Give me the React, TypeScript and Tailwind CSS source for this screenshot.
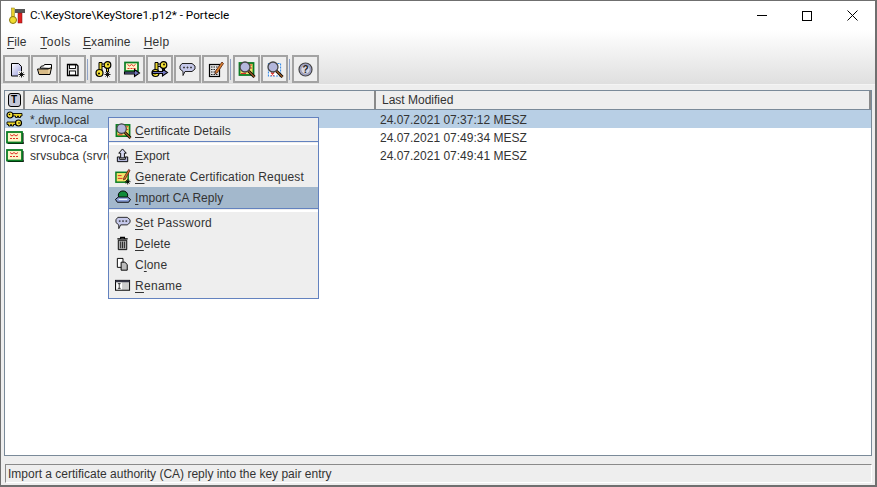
import React from "react";

const Star = ({ x, y }: { x: number; y: number }) => (
  <path
    d={`M${x} ${y - 3}v6M${x - 3} ${y}h6M${x - 2} ${y - 2}l4 4M${x + 2} ${y - 2}l-4 4`}
    stroke="#000"
    strokeWidth="0.9"
  />
);

// two keys as on the toolbar: one head down on the left, one head up on the right
const KeyPairUp = () => (
  <>
    <path d="M4 1.500h3v8h-3z" fill="#e8d42a" stroke="#000" />
    <path d="M7 3h2M7 5.500h2" stroke="#000" />
    <circle cx="4.500" cy="12" r="3.500" fill="#f4e23a" stroke="#000" strokeWidth="1.200" />
    <circle cx="4" cy="12.500" r="1" fill="#000" />
    <path d="M11.500 7h2v4h-2z" fill="#e8d42a" stroke="#000" />
    <circle cx="12.500" cy="4" r="3.300" fill="#f4e23a" stroke="#000" strokeWidth="1.200" />
    <circle cx="13" cy="3.500" r="0.900" fill="#000" />
  </>
);

const Arrow = ({ y = 11 }: { y?: number }) => (
  <path d={`M1.500 ${y}h10v-2.500l5 3.500-5 3.500v-2.500h-10z`} fill="#7479c0" stroke="#000" strokeWidth="1.100" />
);

const Zigzag = ({ x, y }: { x: number; y: number }) => (
  <>
    <path d={`M${x} ${y}l2 1.500 2-1.500 2 1.500 2-1.500`} stroke="#e0302a" fill="none" />
    <path d={`M${x} ${y + 4}h8`} stroke="#e0302a" strokeDasharray="2 1" />
  </>
);

const Glass = ({ x = 0, y = 0 }: { x?: number; y?: number }) => (
  <g transform={`translate(${x} ${y})`}>
    <path d="M9.500 10l6 6" stroke="#000" strokeWidth="3" />
    <path d="M9.500 10l6 6" stroke="#9a5a25" strokeWidth="1.400" />
    <circle cx="6" cy="6" r="5" fill="#b4b7dc" stroke="#444" strokeWidth="1.300" />
  </g>
);

const icons: Record<string, React.ReactNode> = {
  newFile: (
    <>
      <defs>
        <linearGradient id="docFill" x1="0" x2="1" y1="0" y2="1">
          <stop offset="0" stopColor="#ffffff" />
          <stop offset="1" stopColor="#9a9ee0" />
        </linearGradient>
      </defs>
      <path d="M3.500 2.500h7l3 3v9.500h-10z" fill="url(#docFill)" stroke="#000" />
      <rect x="10" y="10" width="6.500" height="6.500" fill="#eeeeee" />
      <Star x={13.500} y={13.500} />
    </>
  ),
  open: (
    <>
      <path d="M4 7l1.500-2h2l1-1.500h7v4z" fill="#fff" stroke="#000" />
      <path d="M1.500 8h10.500l3.500-1.500-1.500 7h-11z" fill="#e8cf9f" stroke="#000" />
      <path d="M3 10h9M3 12h9" stroke="#caa870" />
    </>
  ),
  save: (
    <>
      <path d="M3.500 3.500h9l1.500 1.500v9.500h-10.500z" fill="#e6e6e6" stroke="#000" strokeWidth="1.300" />
      <rect x="5.500" y="4" width="6" height="3.500" fill="#fff" stroke="#000" strokeWidth="0.900" />
      <rect x="5.500" y="10" width="6" height="4" fill="#fff" stroke="#000" strokeWidth="0.900" />
    </>
  ),
  genKey: (
    <>
      <KeyPairUp />
      <Star x={12.500} y={13.500} />
    </>
  ),
  importCert: (
    <>
      <rect x="2" y="1.500" width="13" height="8.500" fill="#fdf6c8" stroke="#0a7d24" strokeWidth="1.700" />
      <Zigzag x={4.500} y={3.500} />
      <Arrow y={11} />
    </>
  ),
  importKey: (
    <>
      <KeyPairUp />
      <Arrow y={10.500} />
    </>
  ),
  bubble: (
    <>
      <path d="M3 2.500h10l3 2.500v3l-3 2.500h-7l-2 4v-4l-3-2.500v-3z" fill="#c5c8ea" stroke="#222" />
      <path d="M4 6.500h2M7.500 6.500h2M11 6.500h2M5 5.500v2M8.500 5.500v2M12 5.500v2" stroke="#333" strokeWidth="0.800" />
    </>
  ),
  report: (
    <>
      <rect x="2.500" y="3.500" width="10" height="12" fill="#e4e4e4" stroke="#000" strokeWidth="1.200" />
      <path d="M4 6h7M4 8.500h7M4 11h7M4 13.500h7" stroke="#222" strokeDasharray="1.500 1" />
      <path d="M15 1l1.500 1.500-6 9-2.500 1.500.5-3z" fill="#d88030" stroke="#521" strokeWidth="0.800" />
    </>
  ),
  examCert: (
    <>
      <rect x="1.500" y="2" width="14" height="12" fill="#f5e36a" stroke="#0a7d24" strokeWidth="1.800" />
      <path d="M12 4h2M12 7h2M3 12.500h5" stroke="#e0302a" />
      <Glass x={1} y={0} />
    </>
  ),
  examCrl: (
    <>
      <rect x="2.500" y="2.500" width="12" height="12.500" fill="#fff" stroke="#3d8ee8" strokeWidth="1.200" strokeDasharray="2 1" />
      <path d="M5 11.500l3 3M8 11.500l-3 3" stroke="#e0302a" strokeWidth="1.200" />
      <Glass x={1} y={0} />
    </>
  ),
  help: (
    <>
      <circle cx="8.500" cy="8.500" r="6.500" fill="#a8abd8" stroke="#444" strokeWidth="1.200" />
      <circle cx="8.500" cy="8.500" r="4.700" fill="#d8d8e6" stroke="#777" strokeWidth="0.600" />
      <text x="8.500" y="12" textAnchor="middle" fontSize="10" fontWeight="700" fontFamily="Liberation Sans" fill="#222">?</text>
    </>
  ),
  keyPair: (
    <>
      <path d="M6 2.500h10v2.500h-1.500v1.500h-2v-1.500h-1v1.500h-2v-1.500h-3.500z" fill="#e8d42a" stroke="#000" strokeWidth="0.900" />
      <circle cx="4" cy="4" r="3" fill="#f4e23a" stroke="#000" strokeWidth="1.200" />
      <circle cx="3.500" cy="3.500" r="0.800" fill="#000" />
      <path d="M10.500 11h-9.500v2.500h1.500v1.500h2v-1.500h1v1.500h2v-1.500h3z" fill="#e8d42a" stroke="#000" strokeWidth="0.900" />
      <circle cx="12.500" cy="12" r="3" fill="#f4e23a" stroke="#000" strokeWidth="1.200" />
      <circle cx="13" cy="12" r="0.800" fill="#000" />
    </>
  ),
  cert: (
    <>
      <rect x="1.500" y="13" width="16" height="2" fill="#000" />
      <rect x="15.500" y="4" width="2" height="11" fill="#000" />
      <rect x="1" y="3" width="15" height="10.500" fill="#fdf6c8" stroke="#0a7d24" strokeWidth="1.800" />
      <Zigzag x={4} y={5.500} />
    </>
  ),
  export: (
    <>
      <path d="M8 1l4 4.500h-2v5h-4v-5h-2z" fill="#d5d7ef" stroke="#000" />
      <path d="M2.500 9.500h2.500v2.500h6v-2.500h2.500v5h-11z" fill="#b4b7dc" stroke="#000" />
    </>
  ),
  genCsr: (
    <>
      <rect x="1" y="3.500" width="13" height="10.500" fill="#f5e36a" stroke="#0a7d24" strokeWidth="1.600" />
      <path d="M14.500 0.500l1.500 1-5 9-2 1 .5-2.500z" fill="#d88030" stroke="#511" strokeWidth="0.800" />
      <path d="M3 7h4M3 10h5" stroke="#e0302a" />
      <Star x={13.500} y={13.500} />
    </>
  ),
  importReply: (
    <>
      <ellipse cx="8.500" cy="5.500" rx="5" ry="4.500" fill="#0f8a3a" stroke="#000" />
      <path d="M.5 10l3-2.500h10l3 2.500-2 3h-12z" fill="#8ba0d8" stroke="#000" />
      <path d="M4 10h9" stroke="#fff" />
    </>
  ),
  trash: (
    <>
      <path d="M2.500 3h11M6 3v-1.500h4v1.500" stroke="#000" fill="none" strokeWidth="1.300" />
      <path d="M3.500 4.500h9v10h-9z" fill="#aaa" stroke="#000" />
      <path d="M6 6v7M8 6v7M10 6v7" stroke="#222" />
    </>
  ),
  clone: (
    <>
      <path d="M2.500 1.500h6v9.500h-6z" fill="#fff" stroke="#000" />
      <path d="M6.500 5.500h4l2.500 2.500v6h-6.500z" fill="#bbb" stroke="#000" />
    </>
  ),
  rename: (
    <>
      <rect x="0.500" y="2.500" width="15" height="10.500" fill="#ccc" stroke="#000" />
      <rect x="0.500" y="2.500" width="15" height="2" fill="#334" />
      <rect x="1.500" y="5" width="6" height="7" fill="#fff" />
      <path d="M3 6h3M4.500 6v5M3 11h3" stroke="#000" strokeWidth="0.800" />
    </>
  ),
};

const Icon = ({ name, size = 17 }: { name: string; size?: number }) => (
  <svg width={size} height={size} viewBox="0 0 17 17" className="shrink-0 overflow-visible">
    {icons[name]}
  </svg>
);

const ToolButton = ({ icon }: { icon: string }) => (
  <div className="w-[27px] h-[28px] flex items-center justify-center border-2 border-[#a3a3a3] bg-[#eeeeee]">
    <Icon name={icon} />
  </div>
);

const ToolSep = () => <div className="w-[1px] h-[21px] bg-[#8fa3c8] mr-[1px]" />;

const Mnemonic = ({ label, at = 0, className = "" }: { label: string; at?: number; className?: string }) => (
  <span className={`whitespace-nowrap ${className}`}>
    {label.slice(0, at)}
    <span className="underline underline-offset-2">{label[at]}</span>
    {label.slice(at + 1)}
  </span>
);

const rows = [
  { icon: "keyPair", alias: "*.dwp.local", date: "24.07.2021 07:37:12 MESZ", selected: true },
  { icon: "cert", alias: "srvroca-ca", date: "24.07.2021 07:49:34 MESZ" },
  { icon: "cert", alias: "srvsubca (srvroca-ca)", date: "24.07.2021 07:49:41 MESZ" },
];

const MenuItem = ({ icon, label, at = 0, active, className }: { icon: string; label: string; at?: number; active?: boolean; className?: string }) => (
  <div className={`h-[21px] flex items-center pl-[6px] gap-[4px] ${active ? "bg-[#a3b8cc]" : ""}`}>
    <Icon name={icon} size={16} />
    <Mnemonic label={label} at={at} className={className} />
  </div>
);

const MenuSep = () => (
  <div className="h-[4px] border-t border-[#6382bf] border-b-2 border-b-white" />
);

export default function App() {
  return (
    <div className="w-[877px] h-[487px] relative flex flex-col overflow-hidden border border-[#6f6f6f] border-b-2 border-r-2 bg-[#eeeeee] text-[12px] text-[#333333] font-['Liberation_Sans',sans-serif]">
      {/* Title bar */}
      <div className="h-[29px] shrink-0 bg-white flex items-center pl-[7px] text-black">
        <svg width="17" height="17" viewBox="0 0 17 17" className="shrink-0">
          <rect x="7" y="2" width="10" height="4" fill="#555555" />
          <rect x="10" y="6" width="4" height="10" fill="#e02020" stroke="#7a1010" strokeWidth="0.500" />
          <rect x="3.500" y="1" width="3" height="10" fill="#e8d02a" stroke="#8a7a10" strokeWidth="0.500" />
          <circle cx="5" cy="13" r="3.500" fill="#f0dc30" stroke="#8a7a10" />
        </svg>
        <span className="ml-[5px] font-['Roboto',sans-serif] text-[11.7px]">C:\KeyStore\KeyStore1.p12* - Portecle</span>
        <div className="ml-auto flex items-center text-black">
          <div className="w-[46px] h-[29px] flex items-center justify-center"><div className="w-[10px] h-[1px] bg-black ml-[3px]" /></div>
          <div className="w-[46px] h-[29px] flex items-center justify-center"><div className="w-[10px] h-[10px] border border-black ml-[1px]" /></div>
          <div className="w-[46px] h-[29px] flex items-center justify-center">
            <svg width="11" height="11" viewBox="0 0 11 11"><path d="M.5.5l10 10M10.500.5l-10 10" stroke="#000" /></svg>
          </div>
        </div>
      </div>

      {/* Menu and toolbar */}
      <div className="h-[55px] shrink-0 bg-gradient-to-b from-white to-[#dfdfdf] border-b border-[#f4f4f4]">
        <div className="h-[25px] pb-[2px] flex items-center pl-[6px] text-[#333333]">
          <Mnemonic label="File" />
          <Mnemonic label="Tools" className="ml-[14px] tracking-[0.5px]" />
          <Mnemonic label="Examine" className="ml-[12px] tracking-[0.15px]" />
          <Mnemonic label="Help" className="ml-[13px] tracking-[0.25px]" />
        </div>
        <div className="flex items-center pl-[2px] gap-[1px]">
          <ToolButton icon="newFile" />
          <ToolButton icon="open" />
          <ToolButton icon="save" />
          <ToolSep />
          <ToolButton icon="genKey" />
          <ToolButton icon="importCert" />
          <ToolButton icon="importKey" />
          <ToolButton icon="bubble" />
          <ToolButton icon="report" />
          <ToolSep />
          <ToolButton icon="examCert" />
          <ToolButton icon="examCrl" />
          <ToolSep />
          <ToolButton icon="help" />
        </div>
      </div>

      {/* Key store table */}
      <div className="flex-1 min-h-0 mt-[5px] mx-[3px] flex flex-col border border-[#7a8a99] bg-white">
        <div className="h-[19px] shrink-0 flex bg-[#eeeeee] border-b border-[#7a8a99]">
          <div className="w-[20px] flex items-center justify-center border-r-2 border-[#8a8a8a]">
            <div className="w-[13px] h-[14px] flex items-center justify-center rounded-[3px] border-[1.5px] border-black bg-[#c5c8d8] text-[10px] leading-none font-bold text-black">T</div>
          </div>
          <div className="w-[351px] pl-[7px] flex items-center border-r-2 border-[#8a8a8a]">Alias Name</div>
          <div className="flex-1 pl-[6px] flex items-center border-r-2 border-[#8a8a8a]">Last Modified</div>
        </div>
        {rows.map((r) => (
          <div key={r.alias} className={`h-[18px] flex items-center ${r.selected ? "bg-[#b8cfe5]" : ""}`}>
            <div className="w-[25px] pl-[1px]"><Icon name={r.icon} /></div>
            <div className="w-[350px] pt-[1px] whitespace-nowrap tracking-[0.12px]">{r.alias}</div>
            <div className="pt-[1px]">{r.date}</div>
          </div>
        ))}
      </div>

      {/* Status bar */}
      <div className="h-[19px] shrink-0 mt-[8px] mb-[2px] ml-[4px] mr-[3px] pl-[2px] flex items-center border border-[#8a8a8a] border-r-white border-b-white">
        Import a certificate authority (CA) reply into the key pair entry
      </div>

      {/* Context menu */}
      <div className="absolute left-[107px] top-[116px] w-[211px] bg-[#eeeeee] border border-[#6382bf] py-[2px]">
        <MenuItem icon="examCert" label="Certificate Details" className="tracking-[0.1px]" />
        <MenuSep />
        <MenuItem icon="export" label="Export" />
        <MenuItem icon="genCsr" label="Generate Certification Request" className="tracking-[0.14px]" />
        <MenuItem icon="importReply" label="Import CA Reply" active className="tracking-[0.07px]" />
        <MenuSep />
        <MenuItem icon="bubble" label="Set Password" className="tracking-[0.25px]" />
        <MenuItem icon="trash" label="Delete" className="tracking-[0.15px]" />
        <MenuItem icon="clone" label="Clone" at={1} className="tracking-[0.2px]" />
        <MenuItem icon="rename" label="Rename" className="tracking-[0.3px]" />
      </div>
    </div>
  );
}
